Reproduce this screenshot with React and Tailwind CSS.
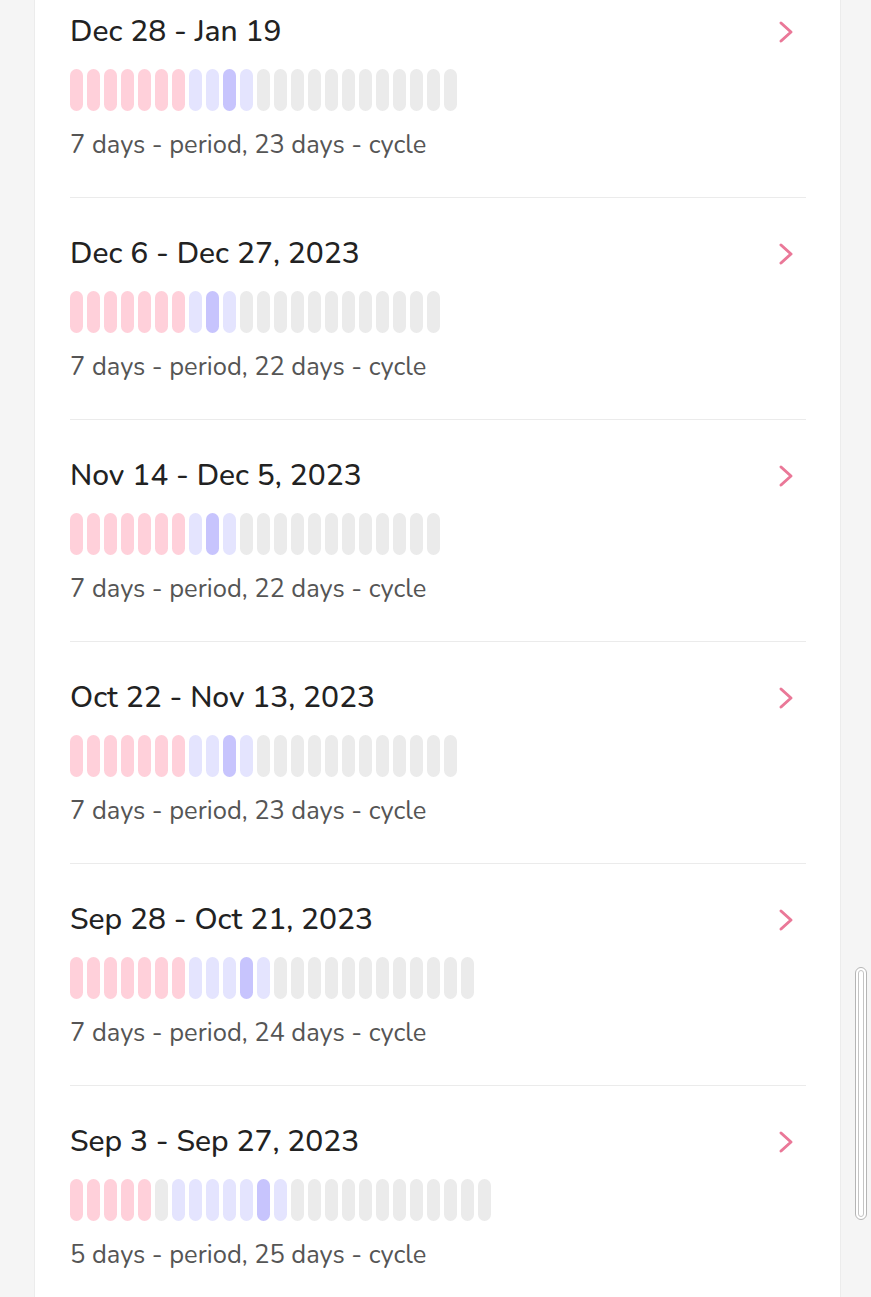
const cycles = [
  { range: "Dec 28 - Jan 19", period: 7, cycle: 23, fertile: [7, 8, 9, 10], ovulation: 9 },
  { range: "Dec 6 - Dec 27, 2023", period: 7, cycle: 22, fertile: [7, 8, 9], ovulation: 8 },
  { range: "Nov 14 - Dec 5, 2023", period: 7, cycle: 22, fertile: [7, 8, 9], ovulation: 8 },
  { range: "Oct 22 - Nov 13, 2023", period: 7, cycle: 23, fertile: [7, 8, 9, 10], ovulation: 9 },
  { range: "Sep 28 - Oct 21, 2023", period: 7, cycle: 24, fertile: [7, 8, 9, 10, 11], ovulation: 10 },
  { range: "Sep 3 - Sep 27, 2023", period: 5, cycle: 25, fertile: [6, 7, 8, 9, 10, 11, 12], ovulation: 11 },
];

const dayColor = (c, i) => {
  if (i < c.period) return "bg-[#ffd0da]";
  if (i === c.ovulation) return "bg-[#c7c4fd]";
  if (c.fertile.includes(i)) return "bg-[#e4e4fe]";
  return "bg-[#ebebeb]";
};

function Chevron() {
  return (
    <svg width="16" height="24" viewBox="0 0 16 24" fill="none" className="shrink-0">
      <polyline
        points="3,3 13,12 3,21"
        stroke="#ea7898"
        strokeWidth="3"
        strokeLinecap="round"
        strokeLinejoin="round"
      />
    </svg>
  );
}

function CycleRow({ c }) {
  const days = Array.from({ length: c.cycle }, (_, i) => i);
  return (
    <div className="border-b border-[#ebebeb] pt-[37px] pb-[35px]">
      <div className="flex items-center justify-between pr-[12px]">
        <div className="text-[30px] leading-[38px] font-medium text-[#222]">{c.range}</div>
        <Chevron />
      </div>
      <div className="mt-[18px] flex gap-[4px]">
        {days.map((i) => (
          <div key={i} className={`h-[42px] w-[13px] rounded-full ${dayColor(c, i)}`} />
        ))}
      </div>
      <div className="mt-[17px] text-[25.5px] leading-[34px] text-[#555]">
        {c.period} days - period, {c.cycle} days - cycle
      </div>
    </div>
  );
}

export default function App() {
  return (
    <div
      className="relative h-[1297px] overflow-hidden bg-[#f5f5f5]"
      style={{ fontFamily: "Nunito, 'Open Sans', sans-serif" }}
    >
      <div className="ml-[34px] flex h-full w-[807px] flex-col border-x border-[#ececec] bg-white pl-[35px] pr-[34px]">
        <div className="-mt-[24px]">
          {cycles.map((c) => (
            <CycleRow key={c.range} c={c} />
          ))}
        </div>
      </div>
      {/* overlay scrollbar */}
      <div className="absolute left-[855px] top-[967px] h-[253px] w-[12px] rounded-full border border-[#b5b5b5] bg-white p-[2px]">
        <div className="h-full w-full rounded-full border border-[#c4c4c4]" />
      </div>
    </div>
  );
}
